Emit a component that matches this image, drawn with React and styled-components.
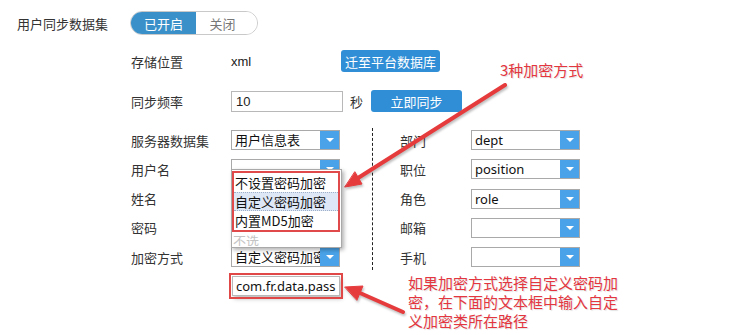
import styled, { createGlobalStyle } from "styled-components";

const GlobalStyle = createGlobalStyle`
  body {
    margin: 0;
    background: #fff;
    font-family: "Noto Sans CJK SC", "Noto Sans", sans-serif;
    font-size: 13px;
    color: #333;
  }
`;

const Page = styled.div`
  position: relative;
  width: 734px;
  height: 335px;
  box-sizing: border-box;
  padding: 11px 0 0 17px;
  overflow: hidden;
  background: #fff;
`;

const TopRow = styled.div`
  display: flex;
  align-items: center;
  height: 24px;
`;

const MainLabel = styled.div`
  width: 113px;
`;

const Toggle = styled.div`
  display: flex;
  width: 128px;
  height: 24px;
  box-sizing: border-box;
  border: 1px solid #c9c9c9;
  border-radius: 12px;
  overflow: hidden;
`;

const ToggleOption = styled.div`
  display: flex;
  align-items: center;
  justify-content: center;
  width: ${(p) => (p.$active ? "65px" : "auto")};
  flex: ${(p) => (p.$active ? "none" : "1")};
  background: ${(p) => (p.$active ? "#3a90c9" : "#fff")};
  color: ${(p) => (p.$active ? "#fff" : "#777")};
  padding-right: ${(p) => (p.$active ? "0" : "8px")};
`;

const Section = styled.div`
  margin-left: 114px;
`;

const Row = styled.div`
  display: flex;
  align-items: center;
  height: 22px;
  margin-top: ${(p) => p.$mt}px;
`;

const FieldLabel = styled.div`
  width: ${(p) => p.$w || 100}px;
  flex: none;
`;

const Value = styled.div`
  width: 110px;
  font-family: "Liberation Sans", sans-serif;
  font-size: 13px;
  color: #222;
`;

const Button = styled.button`
  width: ${(p) => p.$w}px;
  height: 22px;
  padding: 0;
  border: 0;
  border-radius: 3px;
  background: #2f8ed6;
  color: #fff;
  font-family: "Noto Sans CJK SC", sans-serif;
  font-size: 13px;
`;

const TextInput = styled.div`
  width: 112px;
  height: 21px;
  box-sizing: border-box;
  border: 1px solid #b8b8b8;
  padding-left: 4px;
  display: flex;
  align-items: center;
  font-family: "Liberation Sans", sans-serif;
  font-size: 13px;
  color: #222;
`;

const Unit = styled.div`
  margin: 0 8px 0 7px;
`;

const Fields = styled.div`
  display: flex;
  margin-top: 16px;
`;

const Column = styled.div`
  display: grid;
  grid-auto-rows: 20px;
  row-gap: 9.25px;
  padding: 2px 0 3px ${(p) => (p.$right ? "27px" : "0")};
  width: ${(p) => (p.$right ? "auto" : "241px")};
  border-right: ${(p) => (p.$right ? "none" : "1px dashed #222")};
`;

const FieldRow = styled.div`
  display: flex;
  align-items: center;
`;

const Select = styled.div`
  position: relative;
  display: flex;
  width: 109px;
  height: 20px;
  box-sizing: border-box;
  border: 1px solid #a9a9a9;
  background: #fff;
`;

const SelectText = styled.div`
  flex: 1;
  min-width: 0;
  padding-left: 3px;
  line-height: 18px;
  white-space: nowrap;
  overflow: hidden;
  font-family: "Noto Sans", "Noto Sans CJK SC", sans-serif;
  font-size: 13px;
  color: #111;
`;

const SelectArrow = styled.div`
  width: 19px;
  flex: none;
  background: #4aa3e8;
  display: flex;
  align-items: center;
  justify-content: center;
  &::after {
    content: "";
    border-left: 4px solid transparent;
    border-right: 4px solid transparent;
    border-top: 4px solid #fff;
  }
`;

const DropList = styled.div`
  position: absolute;
  left: -1px;
  bottom: 100%;
  width: 111px;
  box-sizing: border-box;
  border: 1px solid #a9a9a9;
  background: #fff;
  box-shadow: 2px 2px 4px rgba(0, 0, 0, 0.3);
  z-index: 2;
`;

const Marked = styled.div`
  margin: 1px 1px 0 0;
  border: 2px solid #e04a4a;
`;

const DropItem = styled.div`
  height: 19px;
  box-sizing: border-box;
  padding-left: 1px;
  line-height: 18px;
  font-size: 13px;
  white-space: nowrap;
  color: ${(p) => (p.$muted ? "#c4c4c4" : "#111")};
  background: ${(p) => (p.$hover ? "#dde7f5" : "transparent")};
  border-top: 1px dotted ${(p) => (p.$hover ? "#9fb1c8" : "transparent")};
  border-bottom: 1px dotted ${(p) => (p.$hover ? "#9fb1c8" : "transparent")};
  overflow: hidden;
  ${(p) => p.$muted && "height: 15px; line-height: 16px;"}
`;

const PathInput = styled.div`
  margin: 6px 0 0 101px;
  width: 108px;
  height: 20px;
  box-sizing: border-box;
  border: 1px solid #b8b8b8;
  padding-left: 3px;
  display: flex;
  align-items: center;
  font-family: "Noto Sans", sans-serif;
  font-size: 13px;
  color: #111;
  outline: 2px solid #e04848;
  outline-offset: 1px;
  box-shadow: 2px 3px 4px rgba(0, 0, 0, 0.25);
`;

const Note = styled.div`
  position: absolute;
  left: ${(p) => p.$x}px;
  top: ${(p) => p.$y}px;
  width: ${(p) => p.$w || 220}px;
  font-family: "Noto Sans CJK SC", sans-serif;
  font-size: 15px;
  line-height: 19px;
  color: #e3363f;
  text-shadow: 1px 1px 1px rgba(0, 0, 0, 0.12);
`;

const Arrows = styled.svg`
  position: absolute;
  left: 0;
  top: 0;
  pointer-events: none;
  filter: drop-shadow(1px 2px 1px rgba(0, 0, 0, 0.25));
`;

function Dropdown({ value, children }) {
  return (
    <Select>
      <SelectText>{value}</SelectText>
      <SelectArrow />
      {children}
    </Select>
  );
}

const leftFields = [
  ["服务器数据集", "用户信息表"],
  ["用户名", ""],
  ["姓名", ""],
  ["密码", ""],
];

const rightFields = [
  ["部门", "dept"],
  ["职位", "position"],
  ["角色", "role"],
  ["邮箱", ""],
  ["手机", ""],
];

export default function App() {
  return (
    <>
      <GlobalStyle />
      <Page>
        <TopRow>
          <MainLabel>用户同步数据集</MainLabel>
          <Toggle>
            <ToggleOption $active>已开启</ToggleOption>
            <ToggleOption>关闭</ToggleOption>
          </Toggle>
        </TopRow>

        <Section>
          <Row $mt={15}>
            <FieldLabel>存储位置</FieldLabel>
            <Value>xml</Value>
            <Button $w={99}>迁至平台数据库</Button>
          </Row>
          <Row $mt={18}>
            <FieldLabel>同步频率</FieldLabel>
            <TextInput>10</TextInput>
            <Unit>秒</Unit>
            <Button $w={91}>立即同步</Button>
          </Row>

          <Fields>
            <Column>
              {leftFields.map(([label, value]) => (
                <FieldRow key={label}>
                  <FieldLabel>{label}</FieldLabel>
                  <Dropdown value={value} />
                </FieldRow>
              ))}
              <FieldRow>
                <FieldLabel>加密方式</FieldLabel>
                <Dropdown value="自定义密码加密">
                  <DropList>
                    <Marked>
                      <DropItem>不设置密码加密</DropItem>
                      <DropItem $hover>自定义密码加密</DropItem>
                      <DropItem>内置MD5加密</DropItem>
                    </Marked>
                    <DropItem $muted>不选</DropItem>
                  </DropList>
                </Dropdown>
              </FieldRow>
            </Column>
            <Column $right>
              {rightFields.map(([label, value]) => (
                <FieldRow key={label}>
                  <FieldLabel $w={71}>{label}</FieldLabel>
                  <Dropdown value={value} />
                </FieldRow>
              ))}
            </Column>
          </Fields>

          <PathInput>com.fr.data.pass</PathInput>
        </Section>

        <Note $x={500} $y={60} $w={120}>3种加密方式</Note>
        <Note $x={408} $y={273} $w={222}>
          如果加密方式选择自定义密码加密，在下面的文本框中输入自定义加密类所在路径
        </Note>

        <Arrows width="734" height="335" viewBox="0 0 734 335">
          <g fill="#e63b3d" stroke="#e63b3d" strokeLinecap="round">
            <line x1="505" y1="85" x2="358" y2="178" strokeWidth="4" />
            <polygon points="345,187 362,184 355,172" strokeWidth="1" />
            <line x1="403" y1="312" x2="360" y2="293" strokeWidth="4" />
            <polygon points="345,287 363,286 357,300" strokeWidth="1" />
          </g>
        </Arrows>
      </Page>
    </>
  );
}
